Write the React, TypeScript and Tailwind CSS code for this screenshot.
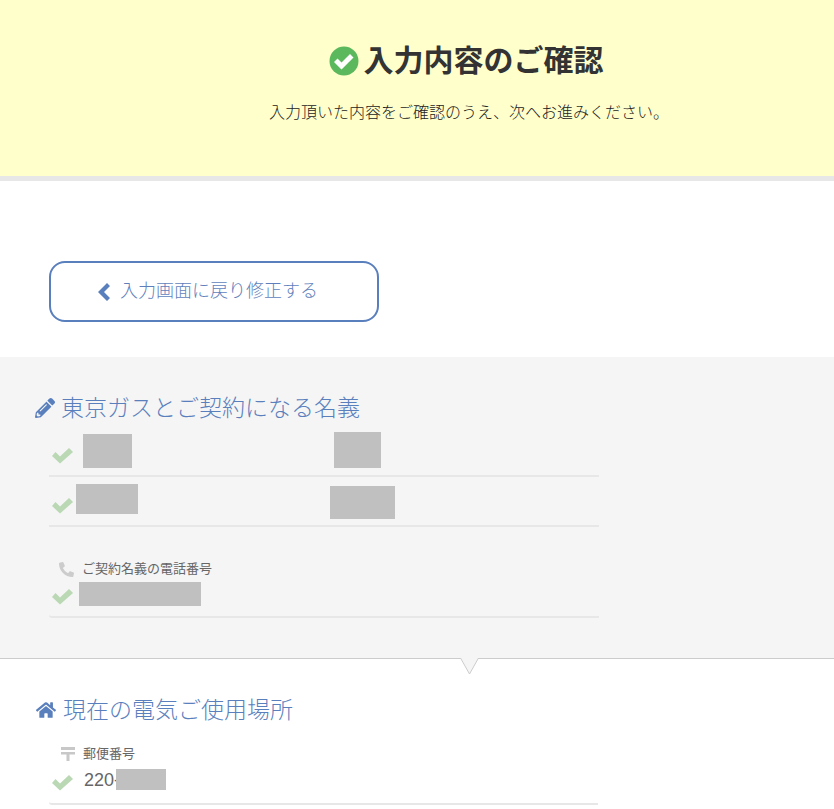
import { FaHome, FaPencilAlt, FaPhoneAlt } from "react-icons/fa";

const font = { fontFamily: '"Liberation Sans", "Noto Sans CJK JP", sans-serif' };

function Check({ className }: { className?: string }) {
  return (
    <svg width="21" height="21" viewBox="0 0 21 21" className={`shrink-0 ${className ?? ""}`}>
      <path d="M0 11l3.500-4L8 11.500 17 3l4 4L8 18.500z" fill="#b9d8b3" />
    </svg>
  );
}

function Mask({ className }: { className: string }) {
  return <div className={`shrink-0 bg-[#c0c0c0] ${className}`} />;
}

function PostMark() {
  return (
    <svg width="14" height="14" viewBox="0 0 14 14">
      <path d="M0 0h14v3H0zM0 5h14v2.500H0zM5.500 7h3v7h-3z" fill="#c8c8c8" />
    </svg>
  );
}

export default function App() {
  return (
    <div className="w-[834px] h-[809px] overflow-hidden bg-white text-[#333]" style={font}>
      {/* heading */}
      <header className="h-[181px] bg-[#ffffcc] border-b-[5px] border-[#e7e7e7] pt-[43px] pl-[100px]">
        <h1 className="flex items-center justify-center gap-[5px] pr-[2px] text-[30px] leading-[36px] font-bold">
          <svg width="30" height="30" viewBox="0 0 30 30">
            <circle cx="15" cy="15" r="14.500" fill="#5cb85c" />
            <path d="m5 16 3.500-3.500 4 4 8.500-8.500 3.500 3.500-12 12z" fill="#fff" />
          </svg>
          入力内容のご確認
        </h1>
        <p className="mt-[22px] pl-[4px] text-center text-[16px] leading-[24px] font-light text-[#222]">
          入力頂いた内容をご確認のうえ、次へお進みください。
        </p>
      </header>

      <div className="h-[176px] pt-[80px] pl-[49px]">
        <a className="flex items-center w-[330px] h-[61px] pl-[47px] gap-[10px] rounded-[16px] border-2 border-[#5a7fbd] text-[18px] font-light text-[#5f7fbc]">
          <svg width="12" height="18" viewBox="0 0 12 18">
            <path d="M9 0l3 3-6 6 6 6-3 3-9-9z" fill="#5a7fbd" />
          </svg>
          入力画面に戻り修正する
        </a>
      </div>

      {/* contract name */}
      <section className="relative h-[302px] bg-[#f5f5f5] border-b border-[#cccccc] pt-[35px] pl-[35px]">
        <h2 className="flex items-center gap-[6px] h-[32px] text-[23px] font-light text-[#5a7fbd]">
          <FaPencilAlt size={20} className="text-[#5a7fbd]" />
          東京ガスとご契約になる名義
        </h2>
        <div className="w-[550px] ml-[14px]">
          <div className="flex items-end h-[53px] pl-[3px] pb-[7px] border-b-2 border-[#e7e7e7]">
            <Check className="mb-[2px]" />
            <Mask className="ml-[10px] w-[49px] h-[34px]" />
            <Mask className="ml-[202px] w-[47px] h-[36px]" />
          </div>
          <div className="flex items-end h-[50px] pl-[3px] pb-[6px] border-b-2 border-[#e7e7e7]">
            <Check className="mb-[3px]" />
            <Mask className="ml-[3px] mb-[5px] w-[62px] h-[30px]" />
            <Mask className="ml-[192px] w-[65px] h-[33px]" />
          </div>
          <div className="flex flex-col justify-end h-[91px] pl-[3px] pb-[9px] border-b-2 border-[#e7e7e7] rounded-bl-[3px]">
            <div className="flex items-center gap-[8px] h-[18px] ml-[7px] mb-[4px] text-[13px] text-[#666]">
              <FaPhoneAlt size={15} className="text-[#cccccc]" />
              ご契約名義の電話番号
            </div>
            <div className="flex items-end">
              <Check />
              <Mask className="ml-[6px] mb-[1px] w-[122px] h-[24px]" />
            </div>
          </div>
        </div>
        {/* notch */}
        <svg width="19" height="18" viewBox="0 0 19 18" className="absolute left-[460px] top-[300px]">
          <path d="M0 0h19L9.500 17z" fill="#f5f5f5" />
          <path d="M.5 1 9.500 17 18.500 1" fill="none" stroke="#cccccc" />
        </svg>
      </section>

      {/* place of use */}
      <section className="pt-[35px] pl-[36px]">
        <h2 className="flex items-center gap-[7px] h-[32px] text-[23px] font-light text-[#5a7fbd]">
          <FaHome size={20} className="text-[#5a7fbd]" />
          現在の電気ご使用場所
        </h2>
        <div className="flex flex-col justify-end w-[549px] h-[79px] ml-[13px] pl-[3px] pb-[10px] border-b-2 border-[#e7e7e7] rounded-bl-[3px]">
          <div className="flex items-center gap-[8px] h-[18px] ml-[9px] mb-[4px] text-[13px] text-[#666]">
            <PostMark />
            郵便番号
          </div>
          <div className="flex items-end">
            <Check />
            <span className="ml-[11px] text-[18px] leading-[26px] text-[#666]">220-</span>
            <Mask className="-ml-[4px] mb-[3px] w-[50px] h-[21px]" />
          </div>
        </div>
      </section>
    </div>
  );
}
